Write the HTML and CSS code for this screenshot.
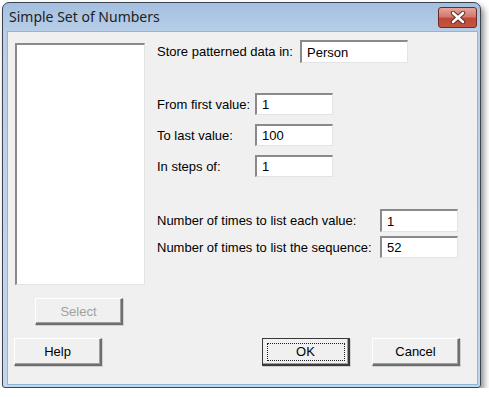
FILE: index.html
```html
<!DOCTYPE html>
<html>
<head>
    <title>Simple Set of Numbers</title>
    <meta name="viewport" content="width=device-width" />
    <link rel="stylesheet" href="styles.css">
</head>
<body>

<div class="window">
    <div class="titlebar">
        <span class="title">Simple Set of Numbers</span>
        <span class="close">
            <svg width="16" height="13" viewBox="0 0 16 13">
                <path d="M3 2 L13 11 M13 2 L3 11" stroke="#5a2a24" stroke-width="4.4" stroke-linecap="round"/>
                <path d="M3 2 L13 11 M13 2 L3 11" stroke="#ffffff" stroke-width="2.6" stroke-linecap="round"/>
            </svg>
        </span>
    </div>

    <div class="client">
        <div class="main">
            <div class="side">
                <div class="listbox"></div>
                <div class="btn select disabled">Select</div>
            </div>

            <div class="fields">
                <div class="row store">
                    <span class="label">Store patterned data in:</span>
                    <div class="field">Person</div>
                </div>

                <div class="group range">
                    <div class="row">
                        <span class="label">From first value:</span>
                        <div class="field">1</div>
                    </div>
                    <div class="row">
                        <span class="label">To last value:</span>
                        <div class="field">100</div>
                    </div>
                    <div class="row">
                        <span class="label">In steps of:</span>
                        <div class="field">1</div>
                    </div>
                </div>

                <div class="group repeat">
                    <div class="row tall">
                        <span class="label">Number of times to list each value:</span>
                        <div class="field">1</div>
                    </div>
                    <div class="row">
                        <span class="label">Number of times to list the sequence:</span>
                        <div class="field">52</div>
                    </div>
                </div>
            </div>
        </div>

        <div class="actions">
            <div class="btn">Help</div>
            <span class="spacer"></span>
            <div class="btn default"><span class="focus">OK</span></div>
            <div class="btn cancel">Cancel</div>
        </div>
    </div>
</div>

</body>
</html>
```

FILE: styles.css
```css
body, html {
    margin: 0;
    background: #ffffff;
    font-family: "Liberation Sans", Arial, sans-serif;
    font-size: 13px;
    color: #000000;
}

.window {
    box-sizing: border-box;
    width: 479px;
    height: 386px;
    margin: 2px 0 0 2px;
    border: 1px solid #3c4450;
    border-radius: 7px 7px 3px 3px;
    background: linear-gradient(to bottom, #a3bfdf 0, #b9cfe8 30px, #c2d7ee 100%);
    box-shadow: 3px 4px 6px rgba(0, 0, 0, 0.45);
    display: flex;
    flex-direction: column;
}

/* title bar */
.titlebar {
    height: 28px;
    display: flex;
    align-items: flex-start;
    justify-content: space-between;
}

.title {
    font-family: "Noto Sans", "Open Sans", sans-serif;
    font-size: 14px;
    line-height: 28px;
    margin-left: 6px;
    color: #222222;
}

.close {
    box-sizing: border-box;
    width: 39px;
    height: 21px;
    margin: 4px 3px 0 0;
    border: 1px solid #6d2b24;
    border-radius: 3px;
    background: linear-gradient(to bottom, #e5a69c 0, #d27a6c 45%, #c04a37 55%, #c4553f 100%);
    display: flex;
    align-items: center;
    justify-content: center;
}

/* client area */
.client {
    flex: 1;
    margin: 0 2px 2px 4px;
    border: 1px solid #8fb6d8;
    background: #f0f0f0;
    padding: 8px 17px 0 6px;
}

.main {
    display: flex;
}

.side {
    width: 131px;
    margin-left: 1px;
}

.listbox {
    box-sizing: border-box;
    width: 130px;
    height: 242px;
    margin-top: 3px;
    background: #ffffff;
    border-style: solid;
    border-width: 2px 1px 1px 2px;
    border-color: #8a8a8a #e3e3e3 #e3e3e3 #8a8a8a;
}

.fields {
    margin-left: 11px;
}

.row {
    display: flex;
    align-items: center;
    height: 22px;
}

.label {
    flex: none;
}

.field {
    box-sizing: border-box;
    height: 100%;
    background: #ffffff;
    border-style: solid;
    border-width: 2px 1px 1px 2px;
    border-color: #8a8a8a #e3e3e3 #e3e3e3 #8a8a8a;
    padding: 0 0 0 5px;
    display: flex;
    align-items: center;
}

.store {
    height: 23px;
}
.store .label { width: 143px; }
.store .field { width: 108px; }

.range {
    margin-top: 30px;
}
.range .row + .row {
    margin-top: 9px;
}
.range .label { width: 98px; }
.range .field { width: 78px; }

.repeat {
    margin-top: 32px;
}
.repeat .row + .row {
    margin-top: 4px;
}
.repeat .row.tall { height: 23px; }
.repeat .label { width: 223px; }
.repeat .field { width: 78px; }

/* buttons */
.btn {
    box-sizing: border-box;
    width: 88px;
    height: 28px;
    background: #f0f0f0;
    border-style: solid;
    border-width: 1px 2px 2px 1px;
    border-color: #ffffff #6e6e6e #6e6e6e #ffffff;
    box-shadow: inset -1px -1px 0 #a0a0a0, 1px 1px 0 #d0d0d0;
    display: flex;
    align-items: center;
    justify-content: center;
}

.select {
    height: 27px;
    margin: 13px 0 0 20px;
}

.disabled {
    color: #a0a0a0;
}

.actions {
    display: flex;
    margin-top: 13px;
}

.spacer {
    flex: 1;
}

.default {
    border-color: #3a3a3a #3a3a3a #3a3a3a #3a3a3a;
    border-width: 1px 2px 2px 1px;
    margin-right: 22px;
}

.focus {
    box-sizing: border-box;
    width: 78px;
    height: 18px;
    border: 1px dotted #202020;
    display: flex;
    align-items: center;
    justify-content: center;
}
```
